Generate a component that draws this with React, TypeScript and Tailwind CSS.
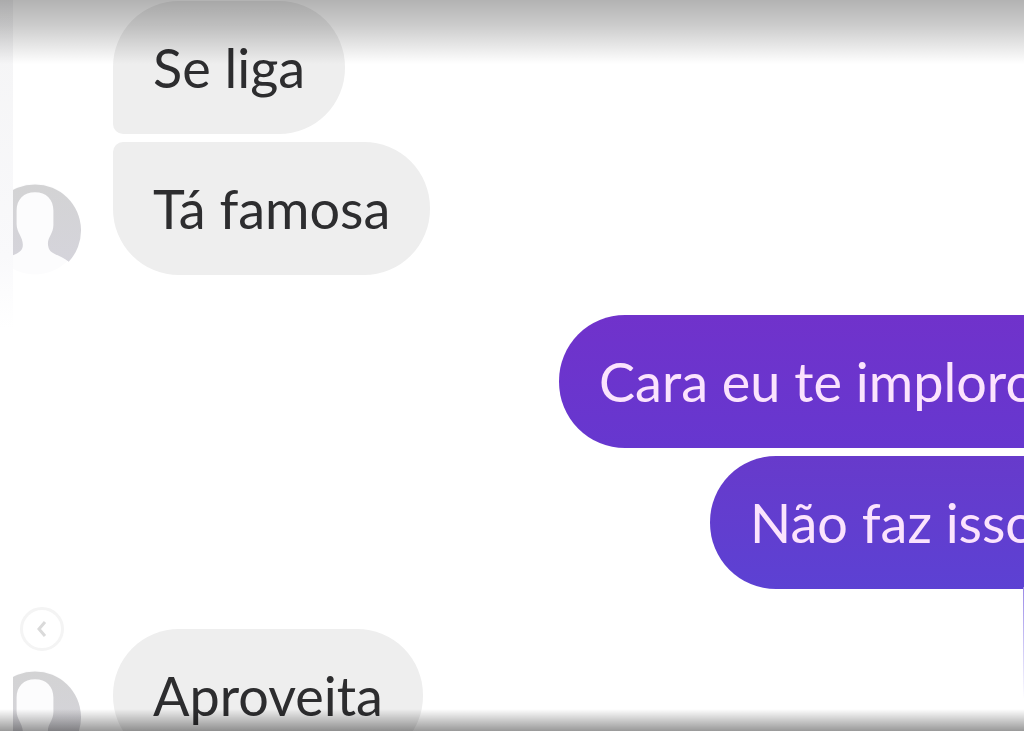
import type { ReactNode } from "react";

function Avatar() {
  return (
    <svg viewBox="0 0 90 90" role="img" aria-label="Foto do perfil" className="-ml-6 size-[92px] shrink-0">
      <defs>
        <linearGradient id="avatar-fill" x1="0" y1="0" x2="0" y2="1">
          <stop offset="0" stopColor="#d3d3d4" />
          <stop offset="1" stopColor="#d5d4db" />
        </linearGradient>
      </defs>
      <circle cx="45" cy="45" r="44.5" fill="#fcfcfd" />
      <path d="M12 77 A45 45 0 1 1 78 77 C70 70 59 70 58 62 C56 54 63 50 63 41 L63 27 C63 16 56 9 45 9 C34 9 27 16 27 27 L27 40 C27 49 34 53 33 62 C32 70 20 70 12 77 Z" fill="url(#avatar-fill)" />
    </svg>
  );
}

function Received({ children, shape }: { children: ReactNode; shape: string }) {
  return (
    <p className={`whitespace-nowrap bg-[#eeeeee] p-10 text-[#2d2d2f] ${shape}`}>{children}</p>
  );
}

function Sent({ children, tone }: { children: ReactNode; tone: string }) {
  return (
    <p className={`whitespace-nowrap rounded-l-[66px] bg-linear-to-b p-10 text-[#fbe3fd] ${tone}`}>
      {children}
    </p>
  );
}

export default function App() {
  return (
    <main className="relative flex h-screen overflow-hidden bg-white font-['Lato','Noto_Sans',sans-serif] text-[54px] leading-[53px]">
      <div className="w-[13px] shrink-0 bg-linear-to-b from-[#f4f4f5] via-[#f9f9fb] via-35% to-white to-45%" />

      <section aria-label="Conversa" className="flex min-w-0 flex-1 flex-col gap-10 overflow-hidden pt-px">
        <div className="flex shrink-0 items-end gap-8">
          <Avatar />
          <div className="flex flex-col items-start gap-2">
            <Received shape="rounded-[66px] rounded-bl-[10px]">Se liga</Received>
            <Received shape="rounded-[66px] rounded-tl-[10px]">Tá famosa</Received>
          </div>
        </div>

        <div className="-mr-[52px] flex shrink-0 flex-col items-end gap-2">
          <Sent tone="from-[#7032cb] to-[#6637cf]">Cara eu te imploro</Sent>
          <Sent tone="from-[#673acb] to-[#5c41d3]">Não faz isso</Sent>
        </div>

        <div className="flex shrink-0 items-end gap-8">
          <Avatar />
          <Received shape="rounded-[66px]">Aproveita</Received>
        </div>
      </section>

      <button
        type="button"
        aria-label="Anterior"
        className="absolute bottom-20 left-5 flex size-11 items-center justify-center rounded-full border-3 border-[#f4f4f4] bg-white text-[#dadada]"
      >
        <svg viewBox="0 0 16 20" fill="none" stroke="currentColor" strokeWidth="3" className="h-5 w-4">
          <path d="M11 3 L5 10 L11 17" />
        </svg>
      </button>
      <div className="absolute right-0 bottom-8 h-28 w-px bg-linear-to-b from-[#9a88e6] to-white" />
      <div className="pointer-events-none absolute inset-x-0 top-0 h-16 bg-linear-to-b from-black/30 via-black/20 via-40% to-transparent" />
      <div className="pointer-events-none absolute inset-x-0 bottom-0 h-[22px] bg-linear-to-b from-transparent to-black/40" />
    </main>
  );
}
